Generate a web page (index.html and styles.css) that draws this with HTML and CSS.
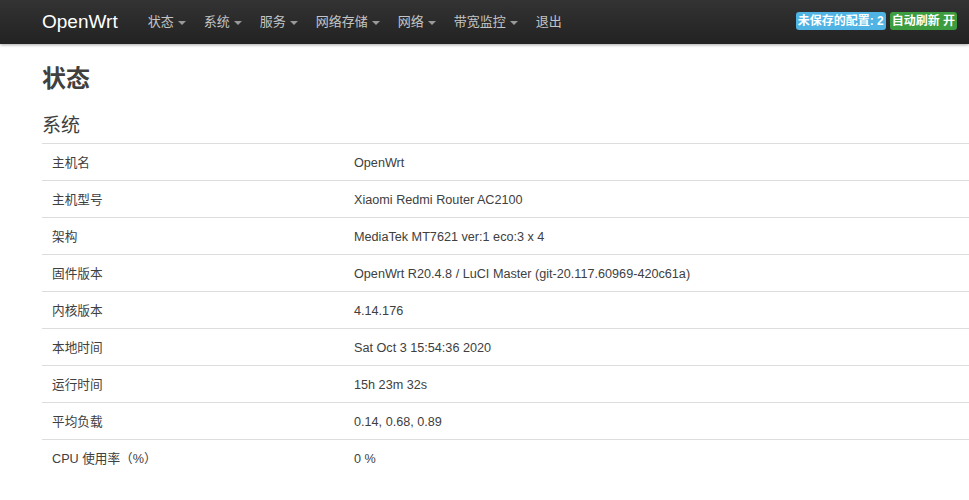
FILE: index.html
```html
<!DOCTYPE html>
<html lang="zh-CN">
<head>
  <meta charset="UTF-8" />
  <meta name="viewport" content="width=device-width, initial-scale=1" />
  <title>OpenWrt - 状态</title>
  <link rel="stylesheet" href="styles.css">
</head>
<body>
  <header class="navbar">
    <a class="brand" href="#">OpenWrt</a>
    <ul class="nav">
      <li><a href="#">状态<span class="caret"></span></a></li>
      <li><a href="#">系统<span class="caret"></span></a></li>
      <li><a href="#">服务<span class="caret"></span></a></li>
      <li><a href="#">网络存储<span class="caret"></span></a></li>
      <li><a href="#">网络<span class="caret"></span></a></li>
      <li><a href="#">带宽监控<span class="caret"></span></a></li>
      <li><a href="#">退出</a></li>
    </ul>
    <div class="indicators">
      <span class="label label-info">未保存的配置: 2</span>
      <span class="label label-success">自动刷新 开</span>
    </div>
  </header>

  <main class="container">
    <h2>状态</h2>
    <h3>系统</h3>
    <table class="status-table">
      <tr><td class="key">主机名</td><td>OpenWrt</td></tr>
      <tr><td class="key">主机型号</td><td>Xiaomi Redmi Router AC2100</td></tr>
      <tr><td class="key">架构</td><td>MediaTek MT7621 ver:1 eco:3 x 4</td></tr>
      <tr><td class="key">固件版本</td><td>OpenWrt R20.4.8 / LuCI Master (git-20.117.60969-420c61a)</td></tr>
      <tr><td class="key">内核版本</td><td>4.14.176</td></tr>
      <tr><td class="key">本地时间</td><td>Sat Oct 3 15:54:36 2020</td></tr>
      <tr><td class="key">运行时间</td><td>15h 23m 32s</td></tr>
      <tr><td class="key">平均负载</td><td>0.14, 0.68, 0.89</td></tr>
      <tr><td class="key">CPU 使用率（%）</td><td>0 %</td></tr>
    </table>
  </main>
</body>
</html>
```

FILE: styles.css
```css
body {
  margin: 0;
  font-family: "Liberation Sans", "Noto Sans CJK SC", sans-serif;
  font-size: 12.65px;
  line-height: 20px;
  color: #404040;
  background: #fff;
}
a {
  text-decoration: none;
}
.navbar {
  display: flex;
  align-items: center;
  height: 44px;
  padding: 0 12px 0 42px;
  background: linear-gradient(to bottom, #333, #222);
  box-shadow: 0 1px 3px rgba(0, 0, 0, 0.35);
}
.brand {
  font-size: 19px;
  color: #fff;
  padding-right: 21px;
  line-height: 44px;
}
.nav {
  display: flex;
  list-style: none;
  margin: 0;
  padding: 0;
}
.nav a {
  display: flex;
  align-items: center;
  padding: 0 9px;
  line-height: 46px;
  color: #c4c4c4;
  font-size: 13px;
}
.caret {
  width: 0;
  height: 0;
  margin-left: 4px;
  margin-top: 1px;
  border-left: 4px solid transparent;
  border-right: 4px solid transparent;
  border-top: 4px solid #999;
}
.indicators {
  margin-left: auto;
  display: flex;
  gap: 4px;
  margin-top: -3px;
}
.label {
  font-size: 12px;
  font-weight: bold;
  line-height: 16px;
  padding: 1px 2px;
  border-radius: 3px;
  color: #fff;
}
.label-info {
  background: #4fb3e3;
}
.label-success {
  background: #3c9c40;
}
.container {
  padding: 0 0 0 42px;
}
h2 {
  font-size: 24px;
  line-height: 30px;
  margin: 20px 0 20px;
  color: #404040;
}
h3 {
  font-size: 19px;
  font-weight: normal;
  line-height: 24px;
  margin: 0 0 5px;
  color: #404040;
}
.status-table {
  width: 100%;
  border-collapse: collapse;
}
.status-table td {
  border-top: 1px solid #ddd;
  padding: 9px 10px 7px;
  line-height: 20px;
}
.status-table td.key {
  width: 282px;
}
```
